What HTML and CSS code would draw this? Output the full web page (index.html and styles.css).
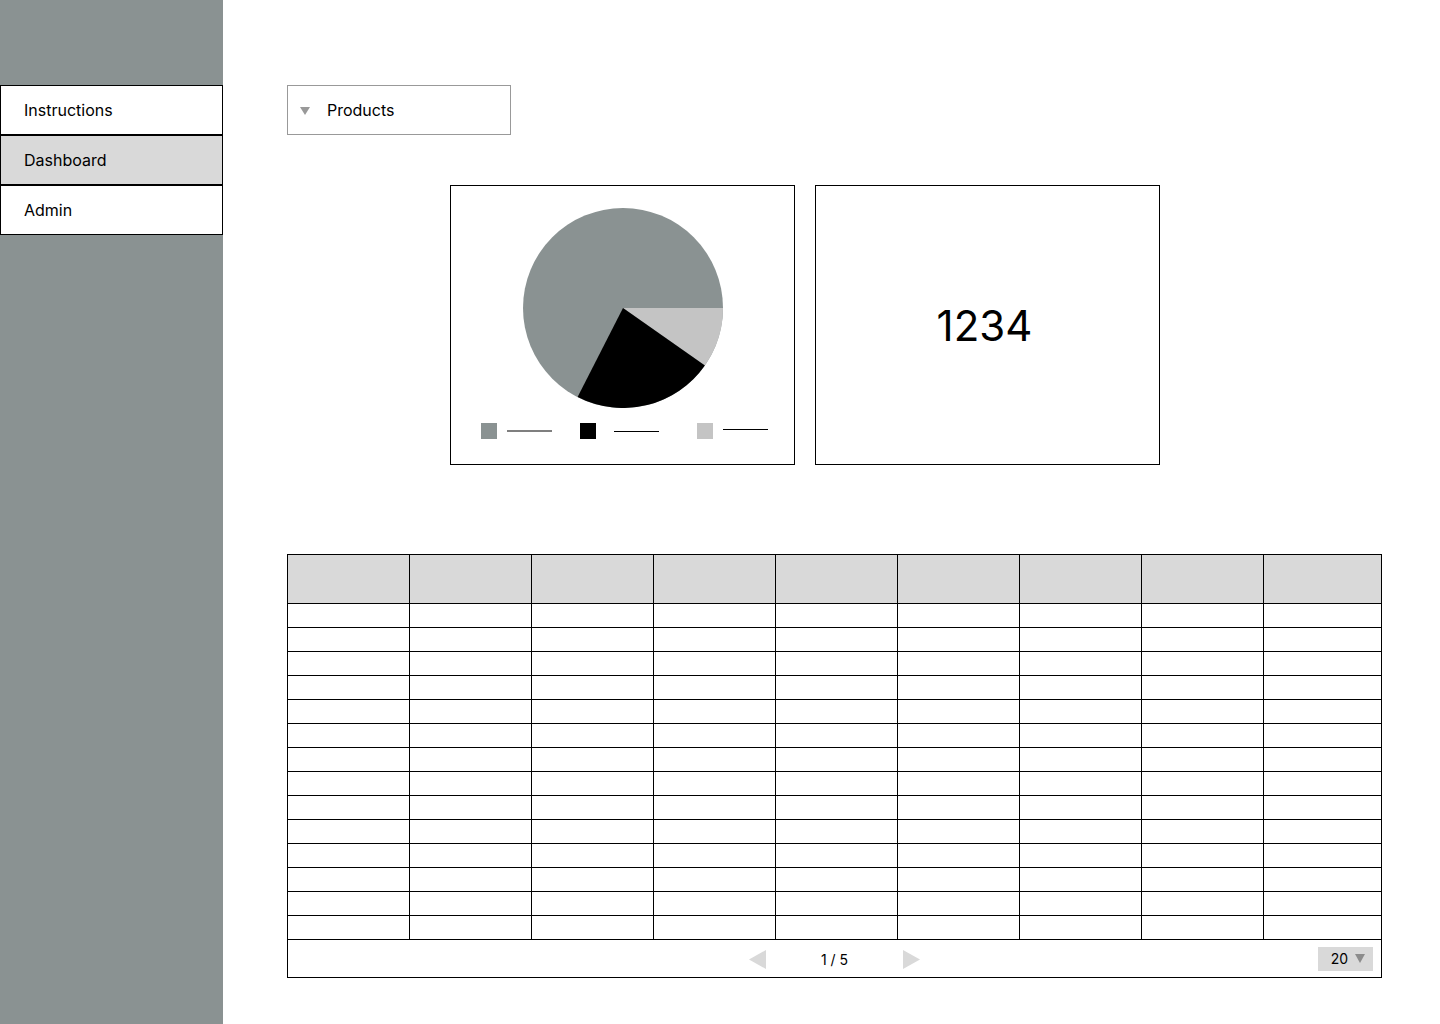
FILE: index.html
```html
<!DOCTYPE html>
<html>
<head>
<meta charset="utf-8">
<link rel="stylesheet" href="styles.css">
</head>
<body>
<div class="app">
  <aside class="sidebar">
    <nav class="nav">
      <div class="nav-item">Instructions</div>
      <div class="nav-item active">Dashboard</div>
      <div class="nav-item">Admin</div>
    </nav>
  </aside>
  <main class="main">
    <div class="select">
      <svg class="caret" width="10" height="8" viewBox="0 0 10 8"><polygon points="0,0 10,0 5,8" fill="#999"/></svg>
      <span>Products</span>
    </div>
    <div class="cards">
      <div class="card chart-card">
        <svg class="pie" width="200" height="200" viewBox="0 0 200 200">
          <circle cx="100" cy="100" r="100" fill="#8a9292"/>
          <path d="M100 100 L200 100 A100 100 0 0 1 181.9 157.4 Z" fill="#c4c4c4"/>
          <path d="M100 100 L181.9 157.4 A100 100 0 0 1 54.6 189.1 Z" fill="#000"/>
        </svg>
        <div class="legend">
          <div class="legend-item"><span class="sw sw-gray"></span><span class="ln ln-gray"></span></div>
          <div class="legend-item"><span class="sw sw-black"></span><span class="ln"></span></div>
          <div class="legend-item"><span class="sw sw-light"></span><span class="ln"></span></div>
        </div>
      </div>
      <div class="card number-card">1234</div>
    </div>
    <table class="grid">
      <colgroup>
        <col class="c"><col class="c"><col class="c"><col class="c"><col class="c"><col class="c"><col class="c"><col class="c"><col>
      </colgroup>
      <thead>
        <tr><th></th><th></th><th></th><th></th><th></th><th></th><th></th><th></th><th></th></tr>
      </thead>
      <tbody>
        <tr><td></td><td></td><td></td><td></td><td></td><td></td><td></td><td></td><td></td></tr>
        <tr><td></td><td></td><td></td><td></td><td></td><td></td><td></td><td></td><td></td></tr>
        <tr><td></td><td></td><td></td><td></td><td></td><td></td><td></td><td></td><td></td></tr>
        <tr><td></td><td></td><td></td><td></td><td></td><td></td><td></td><td></td><td></td></tr>
        <tr><td></td><td></td><td></td><td></td><td></td><td></td><td></td><td></td><td></td></tr>
        <tr><td></td><td></td><td></td><td></td><td></td><td></td><td></td><td></td><td></td></tr>
        <tr><td></td><td></td><td></td><td></td><td></td><td></td><td></td><td></td><td></td></tr>
        <tr><td></td><td></td><td></td><td></td><td></td><td></td><td></td><td></td><td></td></tr>
        <tr><td></td><td></td><td></td><td></td><td></td><td></td><td></td><td></td><td></td></tr>
        <tr><td></td><td></td><td></td><td></td><td></td><td></td><td></td><td></td><td></td></tr>
        <tr><td></td><td></td><td></td><td></td><td></td><td></td><td></td><td></td><td></td></tr>
        <tr><td></td><td></td><td></td><td></td><td></td><td></td><td></td><td></td><td></td></tr>
        <tr><td></td><td></td><td></td><td></td><td></td><td></td><td></td><td></td><td></td></tr>
        <tr><td></td><td></td><td></td><td></td><td></td><td></td><td></td><td></td><td></td></tr>
      </tbody>
      <tfoot>
        <tr>
          <td colspan="9" class="foot-cell">
            <div class="pager">
              <div></div>
              <div class="pages">
                <svg width="17" height="19" viewBox="0 0 17 19"><polygon points="17,0 17,19 0,9.5" fill="#d9d9d9"/></svg>
                <span class="page-text">1 / 5</span>
                <svg width="17" height="19" viewBox="0 0 17 19"><polygon points="0,0 0,19 17,9.5" fill="#d9d9d9"/></svg>
              </div>
              <div class="size">
                <span>20</span>
                <svg width="10" height="9" viewBox="0 0 10 9"><polygon points="0,0 10,0 5,9" fill="#8c8c8c"/></svg>
              </div>
            </div>
          </td>
        </tr>
      </tfoot>
    </table>
  </main>
</div>
</body>
</html>
```

FILE: styles.css
```css
* { box-sizing: border-box; }
html, body { margin: 0; padding: 0; background: #fff; }
body {
  font-family: Inter, "Noto Sans", "Liberation Sans", sans-serif;
  color: #000;
  width: 1440px;
  height: 1024px;
  overflow: hidden;
}
.app {
  display: flex;
  height: 1024px;
}
.sidebar {
  width: 223px;
  flex: 0 0 223px;
  background: #8a9292;
  padding-top: 85px;
}
.nav {
  display: flex;
  flex-direction: column;
}
.nav-item {
  height: 50px;
  border: 1px solid #000;
  background: #fff;
  display: flex;
  align-items: center;
  padding-left: 23px;
  padding-bottom: 1px;
  font-size: 16px;
  font-weight: 400;
}
.nav-item.active { background: #d9d9d9; }

.main {
  flex: 1;
  padding: 85px 0 0 64px;
  display: flex;
  flex-direction: column;
}
.select {
  width: 224px;
  height: 50px;
  border: 1px solid #999;
  display: flex;
  align-items: center;
  padding-left: 12px;
  font-size: 16px;
}
.select .caret { margin-right: 17px; margin-top: 1px; }

.cards {
  display: flex;
  gap: 20px;
  margin-top: 50px;
  margin-left: 163px;
}
.card {
  width: 345px;
  height: 280px;
  border: 1px solid #000;
}
.chart-card {
  display: flex;
  flex-direction: column;
  align-items: center;
  padding-top: 22px;
}
.pie { display: block; }
.legend {
  display: flex;
  width: 100%;
  padding-left: 30px;
  margin-top: 15px;
  align-items: center;
}
.legend-item {
  display: flex;
  align-items: center;
}
.legend-item:nth-child(2) { margin-left: 28px; }
.legend-item:nth-child(3) { margin-left: 38px; }
.sw { width: 16px; height: 16px; display: block; }
.sw-gray { background: #8a9292; }
.sw-black { background: #000; }
.sw-light { background: #c4c4c4; }
.ln { display: block; width: 45px; height: 1px; background: #000; margin-left: 10px; }
.legend-item:nth-child(2) .ln { margin-left: 18px; }
.ln-gray { background: #7f7f7f; height: 2px; }
.legend-item:nth-child(3) .ln { margin-top: -3px; }
.number-card {
  display: flex;
  align-items: center;
  justify-content: center;
  font-size: 42px;
  padding-right: 6px;
}

.grid {
  margin-top: 89px;
  width: 1095px;
  border-collapse: collapse;
  table-layout: fixed;
}
.grid col.c { width: 122px; }
.grid th, .grid td {
  border: 1px solid #000;
  padding: 0;
}
.grid th {
  height: 49px;
  background: #d9d9d9;
}
.grid tbody td { height: 24px; }
.grid .foot-cell { height: 38px; }
.pager {
  display: grid;
  grid-template-columns: 1fr auto 1fr;
  align-items: center;
}
.pages {
  display: flex;
  align-items: center;
  gap: 55px;
  padding-top: 2px;
}
.page-text { font-size: 14px; }
.size {
  justify-self: end;
  margin-right: 8px;
  width: 55px;
  height: 24px;
  background: #d9d9d9;
  display: flex;
  align-items: center;
  justify-content: flex-end;
  gap: 7px;
  padding-right: 8px;
  font-size: 14px;
}
```
